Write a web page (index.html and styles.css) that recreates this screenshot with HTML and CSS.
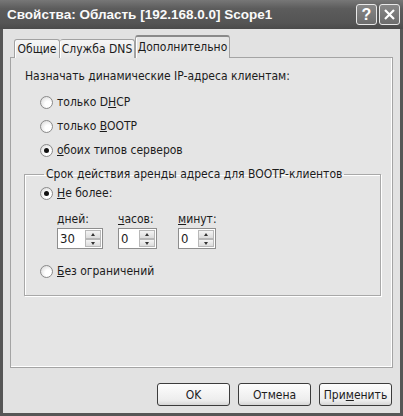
FILE: index.html
```html
<!DOCTYPE html>
<html>
<head>
<meta charset="utf-8">
<title>Свойства: Область [192.168.0.0] Scope1</title>
<link rel="stylesheet" href="styles.css">
</head>
<body>
<div class="window">
	<div class="titlebar">
		<span class="title">Свойства: Область [192.168.0.0] Scope1</span>
		<div class="caption-btns">
			<span class="cbtn">?</span>
			<span class="cbtn"><svg width="13" height="13" viewBox="0 0 13 13"><path d="M2 2L11 11M11 2L2 11" stroke="#fff" stroke-width="2.2" fill="none"/></svg></span>
		</div>
	</div>
	<div class="client">
		<div class="tabs">
			<div class="tab t1">Общие</div>
			<div class="tab t2">Служба DNS</div>
			<div class="tab t3 active">Дополнительно</div>
		</div>
		<div class="panel">
			<div class="heading">Назначать динамические IP-адреса клиентам:</div>
			<div class="options">
				<label class="radio"><span class="rb"></span><span>только D<u>H</u>CP</span></label>
				<label class="radio"><span class="rb"></span><span>только <u>B</u>OOTP</span></label>
				<label class="radio"><span class="rb on"></span><span><u>о</u>боих типов серверов</span></label>
			</div>
			<fieldset class="group">
				<legend>Срок действия аренды адреса для BOOTP-клиентов</legend>
				<label class="radio"><span class="rb on"></span><span><u>Н</u>е более:</span></label>
				<div class="spins">
					<div class="spin-col">
						<div class="spin-label"><u>д</u>ней:</div>
						<div class="spin s1"><span class="val">30</span><span class="arrows"><span class="up"></span><span class="down"></span></span></div>
					</div>
					<div class="spin-col">
						<div class="spin-label"><u>ч</u>асов:</div>
						<div class="spin s2"><span class="val">0</span><span class="arrows"><span class="up"></span><span class="down"></span></span></div>
					</div>
					<div class="spin-col">
						<div class="spin-label"><u>м</u>инут:</div>
						<div class="spin s3"><span class="val">0</span><span class="arrows"><span class="up"></span><span class="down"></span></span></div>
					</div>
				</div>
				<label class="radio last"><span class="rb"></span><span><u>Б</u>ез ограничений</span></label>
			</fieldset>
		</div>
		<div class="buttons">
			<span class="btn">OK</span>
			<span class="btn">Отмена</span>
			<span class="btn">При<u>м</u>енить</span>
		</div>
	</div>
</div>
</body>
</html>
```

FILE: styles.css
```css
html,body{margin:0;padding:0;}
body{background:#fff;font-family:"DejaVu Sans Condensed","DejaVu Sans",Verdana,sans-serif;font-size:12px;color:#1c1c1c;}

.window{width:403px;height:416px;box-sizing:border-box;background:#565656;padding:0 3px 3px 3px;display:flex;flex-direction:column;}

.titlebar{height:29px;display:flex;align-items:center;justify-content:space-between;margin:0 -3px;padding:0 3px 0 7px;
	background:linear-gradient(#777,#5c5c5c 30%,#545454 80%,#4a4a4a);}
.title{font-family:"Liberation Sans",Arial,sans-serif;font-weight:bold;font-size:13.5px;color:#fafafa;padding-bottom:1px;}
.caption-btns{display:flex;gap:2px;}
.cbtn{width:19px;height:19px;border:1px solid #e8e8e8;border-radius:3px;background:linear-gradient(#888,#6c6c6c);
	display:flex;align-items:center;justify-content:center;color:#fff;font-family:"Liberation Sans",Arial,sans-serif;font-weight:bold;font-size:16px;}

.client{flex:1;background:#e2e2e2;display:flex;flex-direction:column;}

.tabs{display:flex;align-items:flex-end;height:22px;margin:7px 0 -1px 9px;position:relative;z-index:1;}
.tab{height:19px;box-sizing:border-box;border:1px solid #a2a2a2;border-bottom:none;border-radius:3px 3px 0 0;
	background:linear-gradient(#f6f6f6,#e6e6e6);text-align:center;line-height:19px;box-shadow:inset 1px 0 #fff;}
.t1{width:46px;margin-left:2px;}
.t2{width:75px;border-left:none;}
.t3{width:95px;}
.tab.active{height:23px;line-height:20px;background:#e6e6e6;border-top:2px solid #8a8a8a;}

.panel{margin:0 7px;height:311px;box-sizing:border-box;border:1px solid #a4a4a4;background:#e5e5e5;
	box-shadow:inset -1px -1px #fff;padding:10px 11px 0 13px;}
.heading{height:16px;line-height:16px;padding-left:1px;}
.options{display:flex;flex-direction:column;gap:8px;margin-top:10px;padding-left:16px;}

.radio{display:flex;align-items:center;height:16px;gap:4px;}
.radio u{text-decoration:underline;}
.rb{width:11px;height:11px;border:1px solid #8a8a8a;border-radius:50%;background:radial-gradient(circle at 65% 65%,#fff 30%,#d8d8d8 90%);
	position:relative;flex:none;}
.rb.on::after{content:"";position:absolute;left:3px;top:3px;width:5px;height:5px;border-radius:50%;background:#111;}

.group{margin:8px 0 0 0;padding:3px 0 16px 15px;border:1px solid #a8a8a8;box-shadow:1px 1px #fff,inset 1px 1px #fff;}
.group legend{padding:0 2px;margin-left:4px;line-height:16px;}
.spins{display:grid;grid-template-columns:61px 60px auto;margin:10px 0 14px 17px;}
.spin-label{height:16px;line-height:16px;margin-bottom:1px;}
.spin{height:21px;box-sizing:border-box;border:1px solid #8e8e8e;background:#fff;display:flex;align-items:stretch;}
.s1{width:46px;}
.s2{width:39px;}
.s3{width:38px;}
.val{flex:1;line-height:19px;padding-left:2px;font-size:13px;}
.arrows{width:16px;display:flex;flex-direction:column;padding:1px 1px 1px 0;}
.arrows span{flex:1;border:1px solid #b8b8b8;background:linear-gradient(#f4f4f4,#dcdcdc);position:relative;}
.arrows span::after{content:"";position:absolute;left:5px;top:2px;border-left:2px solid transparent;border-right:2px solid transparent;}
.arrows .up::after{border-bottom:3px solid #333;}
.arrows .down::after{border-top:3px solid #333;}

.buttons{display:flex;justify-content:flex-end;gap:8px;margin:15px 8px 0 0;}
.btn{width:73px;height:23px;box-sizing:border-box;border:1px solid #3c3c3c;border-radius:3px;background:linear-gradient(#fdfdfd,#ececec 80%,#d6d6d6);
	display:flex;align-items:center;justify-content:center;}
```
